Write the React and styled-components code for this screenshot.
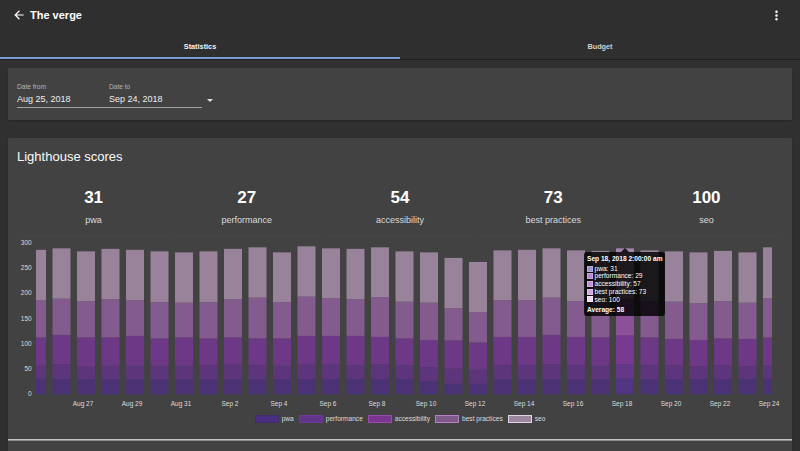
import React from 'react';
import styled, { createGlobalStyle } from 'styled-components';

const GlobalStyle = createGlobalStyle`
  html, body { margin: 0; padding: 0; background: #303030; overflow: hidden; }
  body { font-family: "Liberation Sans", Arial, Helvetica, sans-serif; color: #fff; }
  * { box-sizing: border-box; }
`;

const AppBar = styled.header`
  background: #2f2f2f;
  border-bottom: 1px solid #1f1f1f;
`;

const Toolbar = styled.div`
  height: 30px;
  display: flex;
  align-items: center;
  padding: 0 16px 0 12px;
  gap: 4px;
`;

const Title = styled.h1`
  flex: 1;
  margin: 0;
  font-size: 11px;
  font-weight: 700;
  line-height: 14px;
  color: #fff;
`;

const Tabs = styled.nav`
  display: flex;
  height: 29px;
`;

const Tab = styled.div`
  flex: 1;
  display: flex;
  align-items: center;
  justify-content: center;
  padding-top: 3px;
  font-size: 7.3px;
  font-weight: 700;
  color: ${(p) => (p.$active ? '#f2f2f2' : '#cfcfcf')};
  box-shadow: ${(p) => (p.$active ? 'inset 0 -2px 0 #7b9ad6' : 'none')};
`;

const Main = styled.main`
  padding: 8px;
`;

const Card = styled.section`
  background: #424242;
  box-shadow: 0 1px 2px rgba(0, 0, 0, 0.25);
  border-radius: 1px;
`;

const DateCard = styled(Card)`
  height: 52px;
  display: flex;
  align-items: flex-start;
  padding: 15px 9px 0;
`;

const RangeField = styled.div`
  display: flex;
  width: 185px;
  padding-bottom: 2px;
  border-bottom: 1px solid #a2a2a2;
`;

const Field = styled.div`
  width: 92px;
  display: flex;
  flex-direction: column;
`;

const FieldLabel = styled.span`
  font-size: 6.6px;
  line-height: 8px;
  color: #b4b4b4;
`;

const FieldValue = styled.span`
  margin-top: 2.5px;
  font-size: 9px;
  line-height: 11px;
  color: #eeeeee;
`;

const DropArrow = styled.span`
  margin: 15.5px 0 0 5px;
  width: 0;
  height: 0;
  border-left: 3px solid transparent;
  border-right: 3px solid transparent;
  border-top: 3px solid #e0e0e0;
`;

const ScoresCard = styled(Card)`
  margin-top: 18px;
  padding: 11px 9px 30px;
`;

const CardTitle = styled.h2`
  margin: 0;
  font-size: 13px;
  font-weight: 400;
  line-height: 15px;
  color: #fafafa;
`;

const ScoreGrid = styled.div`
  margin-top: 24px;
  display: grid;
  grid-template-columns: repeat(5, 1fr);
  column-gap: 6px;
  padding: 0 3px;
`;

const ScoreBox = styled.div`
  text-align: center;
  padding-bottom: 10px;
  border-bottom: 1px solid rgba(255, 255, 255, 0.025);
`;

const ScoreValue = styled.div`
  font-size: 17px;
  font-weight: 700;
  line-height: 20px;
  color: #fff;
`;

const ScoreLabel = styled.div`
  margin-top: 6.5px;
  font-size: 9px;
  line-height: 11px;
  color: #dcdcdc;
`;

const ChartWrap = styled.div`
  position: relative;
  height: 174px;
`;

const ChartSvg = styled.svg`
  display: block;
  font-family: "Liberation Sans", Arial, sans-serif;
`;

const Tooltip = styled.div`
  position: absolute;
  left: 567px;
  top: 15px;
  width: 81px;
  height: 64px;
  padding: 3.5px 3px 0;
  background: rgba(0, 0, 0, 0.82);
  border-radius: 3px;
  font-size: 6.6px;
  line-height: 7.7px;
  color: #fff;
  white-space: nowrap;
  &::before {
    content: '';
    position: absolute;
    left: 37px;
    top: -4px;
    border-left: 4px solid transparent;
    border-right: 4px solid transparent;
    border-bottom: 4px solid rgba(0, 0, 0, 0.82);
  }
`;

const TipTitle = styled.div`
  font-weight: 700;
  margin-bottom: 2px;
`;

const TipRow = styled.div`
  display: flex;
  align-items: center;
`;

const TipSwatch = styled.span`
  width: 6px;
  height: 6px;
  margin-right: 1.5px;
  background: ${(p) => p.$color};
  border: 1px solid ${(p) => p.$border};
`;

const TipFooter = styled.div`
  margin-top: 2.8px;
  font-weight: 700;
`;

const Legend = styled.div`
  margin-top: 4px;
  display: flex;
  justify-content: center;
  gap: 5px;
`;

const LegendItem = styled.div`
  display: flex;
  align-items: center;
  gap: 3px;
  font-size: 6.6px;
  line-height: 8px;
  color: #dddddd;
`;

const LegendBox = styled.span`
  width: 24px;
  height: 8px;
  background: ${(p) => p.$color};
  border: 1px solid ${(p) => p.$border};
`;

const Divider = styled.div`
  margin: 16px -9px 0;
  height: 2px;
  border-top: 1px solid #c4c4c4;
  border-bottom: 1px solid #8c8c8c;
`;

const SERIES = [
  { name: 'pwa', bar: '#4b3275', hover: '#513482', legend: '#4a2e80', border: '#44296f', tip: '#9f93c9', tipBorder: '#b7addb' },
  { name: 'performance', bar: '#5c357a', hover: '#643887', legend: '#63348b', border: '#6e3a98', tip: '#b48ad0', tipBorder: '#c9a6e0' },
  { name: 'accessibility', bar: '#6d3986', hover: '#783a90', legend: '#7a3590', border: '#9b4aae', tip: '#c38ed6', tipBorder: '#d6b0e4' },
  { name: 'best practices', bar: '#835b8e', hover: '#8c5099', legend: '#7f5a89', border: '#b57fc4', tip: '#d3a6dd', tipBorder: '#e2c2e9' },
  { name: 'seo', bar: '#98839b', hover: '#a485ab', legend: '#9b879f', border: '#e3d2e8', tip: '#ecd9f0', tipBorder: '#f6ecf8' },
];

// cumulative tops: [pwa, performance, accessibility, best practices, seo]
const DATA = [
  [30, 57, 113, 187, 287], [30, 60, 118, 190, 290], [30, 55, 113, 185, 284], [30, 57, 113, 189, 289],
  [30, 57, 116, 187, 287], [30, 57, 111, 183, 284], [30, 57, 113, 182, 282], [30, 58, 111, 183, 284],
  [30, 59, 113, 189, 289], [30, 58, 111, 192, 292], [30, 57, 111, 183, 282], [30, 59, 116, 194, 294],
  [30, 59, 116, 191, 290], [30, 58, 116, 189, 289], [30, 60, 114, 193, 292], [30, 58, 111, 184, 284],
  [26, 54, 108, 182, 282], [21, 51, 107, 171, 271], [21, 49, 103, 163, 263], [30, 58, 114, 187, 286],
  [30, 58, 114, 187, 287], [30, 60, 118, 192, 290], [30, 58, 114, 185, 286], [30, 57, 113, 187, 285],
  [31, 60, 117, 190, 290], [30, 58, 113, 185, 286], [30, 58, 110, 184, 284], [30, 56, 108, 181, 282],
  [30, 58, 111, 185, 285], [30, 56, 110, 182, 282], [30, 58, 113, 191, 292],
];

const HOVER = 24;
const yOf = (v) => 157.3 - v * 0.5033;
const dayLabel = (d) => {
  const n = 25 + d;
  return n <= 31 ? `Aug ${n}` : `Sep ${n - 31}`;
};

const ArrowBack = () => (
  <svg width="14" height="14" viewBox="0 0 24 24" fill="#fff">
    <path d="M20 11H7.83l5.59-5.59L12 4l-8 8 8 8 1.41-1.41L7.83 13H20v-2z" />
  </svg>
);

const MoreVert = () => (
  <svg width="15" height="15" viewBox="0 0 24 24" fill="#fff">
    <path d="M12 8c1.1 0 2-.9 2-2s-.9-2-2-2-2 .9-2 2 .9 2 2 2zm0 2c-1.1 0-2 .9-2 2s.9 2 2 2 2-.9 2-2-.9-2-2-2zm0 6c-1.1 0-2 .9-2 2s.9 2 2 2 2-.9 2-2-.9-2-2-2z" />
  </svg>
);

const Chart = () => (
  <ChartSvg width="766" height="174" viewBox="0 0 766 174">
    <defs>
      <clipPath id="plot">
        <rect x="19" y="0" width="736" height="160" />
      </clipPath>
    </defs>
    {[0, 50, 100, 150, 200, 250, 300].map((v) => (
      <text key={v} x="14.7" y={yOf(v)} fontSize="6.5" fill="#dddddd" textAnchor="end" dominantBaseline="middle">
        {v}
      </text>
    ))}
    <g clipPath="url(#plot)">
      {DATA.map((tops, d) => {
        const cx = 20 + 24.5 * d;
        let prev = 0;
        return tops.map((top, i) => {
          const y1 = yOf(top);
          const y0 = yOf(prev);
          prev = top;
          return (
            <rect
              key={`${d}-${i}`}
              x={cx - 9}
              y={y1}
              width="18"
              height={y0 - y1}
              fill={d === HOVER ? SERIES[i].hover : SERIES[i].bar}
            />
          );
        });
      })}
    </g>
    {Array.from({ length: 15 }, (_, k) => 2 * (k + 1)).map((d) => (
      <text key={d} x={17 + 24.5 * d} y="167" fontSize="6.5" fill="#dddddd" textAnchor="middle" dominantBaseline="middle">
        {dayLabel(d)}
      </text>
    ))}
  </ChartSvg>
);

const SCORES = [
  { value: 31, label: 'pwa' },
  { value: 27, label: 'performance' },
  { value: 54, label: 'accessibility' },
  { value: 73, label: 'best practices' },
  { value: 100, label: 'seo' },
];

const TIP = [31, 29, 57, 73, 100];

export default function App() {
  return (
    <>
      <GlobalStyle />
      <AppBar>
        <Toolbar>
          <ArrowBack />
          <Title>The verge</Title>
          <MoreVert />
        </Toolbar>
        <Tabs>
          <Tab $active>Statistics</Tab>
          <Tab>Budget</Tab>
        </Tabs>
      </AppBar>
      <Main>
        <DateCard>
          <RangeField>
            <Field>
              <FieldLabel>Date from</FieldLabel>
              <FieldValue>Aug 25, 2018</FieldValue>
            </Field>
            <Field>
              <FieldLabel>Date to</FieldLabel>
              <FieldValue>Sep 24, 2018</FieldValue>
            </Field>
          </RangeField>
          <DropArrow />
        </DateCard>
        <ScoresCard>
          <CardTitle>Lighthouse scores</CardTitle>
          <ScoreGrid>
            {SCORES.map((s) => (
              <ScoreBox key={s.label}>
                <ScoreValue>{s.value}</ScoreValue>
                <ScoreLabel>{s.label}</ScoreLabel>
              </ScoreBox>
            ))}
          </ScoreGrid>
          <ChartWrap>
            <Chart />
            <Tooltip>
              <TipTitle>Sep 18, 2018 2:00:00 am</TipTitle>
              {SERIES.map((s, i) => (
                <TipRow key={s.name}>
                  <TipSwatch $color={s.tip} $border={s.tipBorder} />
                  {s.name}: {TIP[i]}
                </TipRow>
              ))}
              <TipFooter>Average: 58</TipFooter>
            </Tooltip>
          </ChartWrap>
          <Legend>
            {SERIES.map((s) => (
              <LegendItem key={s.name}>
                <LegendBox $color={s.legend} $border={s.border} />
                {s.name}
              </LegendItem>
            ))}
          </Legend>
          <Divider />
        </ScoresCard>
      </Main>
    </>
  );
}
